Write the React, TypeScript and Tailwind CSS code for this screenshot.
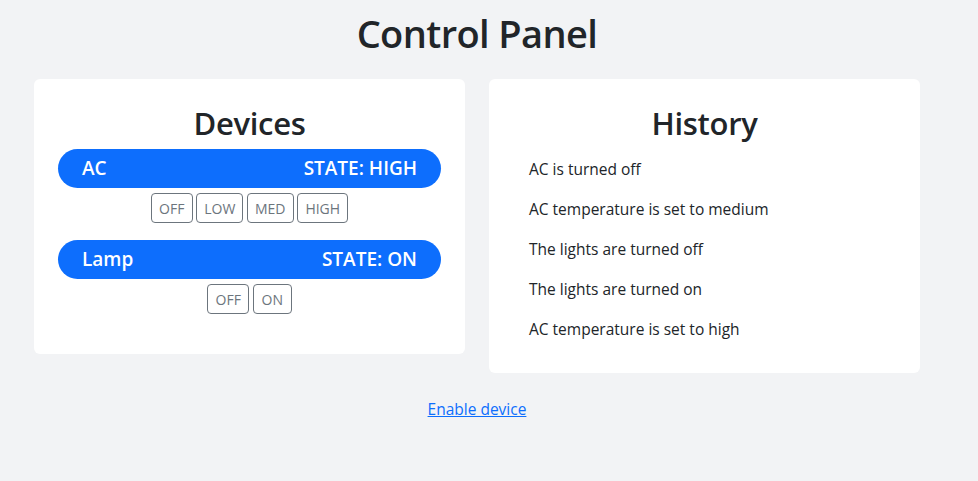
import React from "react";

const devices = [
  {
    name: "AC",
    state: "HIGH",
    options: [
      { label: "OFF", w: "w-[42px]" },
      { label: "LOW", w: "w-[47px]" },
      { label: "MED", w: "w-[47px]" },
      { label: "HIGH", w: "w-[51px]" },
    ],
  },
  {
    name: "Lamp",
    state: "ON",
    options: [
      { label: "OFF", w: "w-[42px]" },
      { label: "ON", w: "w-[39px]" },
    ],
  },
];

const history = [
  "AC is turned off",
  "AC temperature is set to medium",
  "The lights are turned off",
  "The lights are turned on",
  "AC temperature is set to high",
];

export default function App() {
  return (
    <div
      className="min-h-[481px] w-full bg-[#f2f3f5] text-[#212529]"
      style={{ fontFamily: '"Open Sans", "Noto Sans", sans-serif' }}
    >
      <div className="ml-[34px] w-[886px] pt-[10px]">
        <h1 className="text-center text-[38px] font-semibold leading-[46px] tracking-[-0.6px]">Control Panel</h1>
        <div className="mt-[23px] flex items-start gap-[24px]">
          <div className="w-[431px] rounded-[6px] bg-white px-[24px] pt-[25px] pb-[40px]">
            <h2 className="mb-[7px] text-center text-[31px] font-semibold leading-[38px] tracking-[-0.3px]">Devices</h2>
            {devices.map((d, i) => (
              <div key={d.name} className={i === 0 ? "mb-[17px]" : ""}>
                <div className="flex h-[39px] items-center justify-between rounded-full bg-[#0d6efd] px-[24px] text-[19px] font-semibold text-white">
                  <span>{d.name}</span>
                  <span>STATE: {d.state}</span>
                </div>
                <div className="mt-[5px] flex justify-center gap-[3.5px]">
                  {d.options.map((o) => (
                    <button
                      key={o.label}
                      className={`${o.w} flex h-[30px] items-center justify-center rounded-[4px] border border-[#6c757d] bg-white text-[14px] text-[#6c757d]`}
                    >
                      {o.label}
                    </button>
                  ))}
                </div>
              </div>
            ))}
          </div>
          <div className="w-[431px] rounded-[6px] bg-white pt-[25px] pb-[32px]">
            <h2 className="mb-[15px] text-center text-[31px] font-semibold leading-[38px] tracking-[-0.3px]">History</h2>
            <ul className="flex flex-col gap-[16px] pl-[40px]">
              {history.map((h) => (
                <li key={h} className="text-[15.5px] leading-[24px]">
                  {h}
                </li>
              ))}
            </ul>
          </div>
        </div>
        <div className="mt-[24px] text-center">
          <a href="#" className="text-[15.5px] leading-[24px] text-[#0d6efd] underline">
            Enable device
          </a>
        </div>
      </div>
    </div>
  );
}
